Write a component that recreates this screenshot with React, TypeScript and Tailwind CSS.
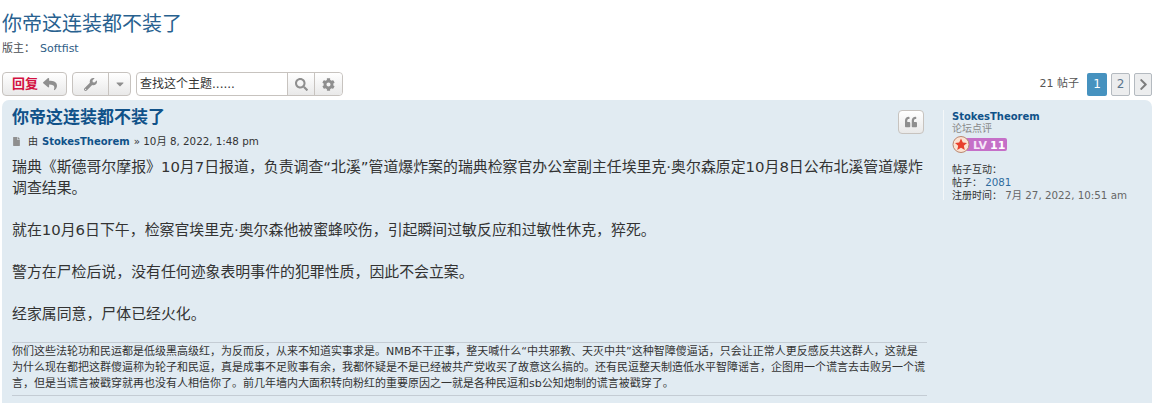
import { FaReply, FaWrench, FaCaretDown, FaSearch, FaCog, FaQuoteLeft, FaFile, FaChevronRight } from "react-icons/fa";

const font = "font-['DejaVu_Sans','Noto_Sans_CJK_SC',sans-serif]";

function Badge() {
  return (
    <svg width="56" height="17" viewBox="0 0 56 17" className="block">
      <rect x="10" y="2" width="45" height="13" rx="2" fill="#c56fc8" />
      <circle cx="9" cy="8.5" r="8" fill="#fbe3d3" stroke="#b9866f" />
      <path d="M9 2.5 L10.8 6.5 L15 7 L11.8 9.8 L12.8 14 L9 11.8 L5.2 14 L6.2 9.8 L3 7 L7.2 6.5 Z" fill="#e8402c" />
      <text x="21" y="12.5" fontSize="11" fontWeight="700" fill="#f6e6f8">LV</text>
      <text x="38" y="12.5" fontSize="11" fontWeight="700" fill="#ffffff">11</text>
    </svg>
  );
}

export default function App() {
  return (
    <div className={`${font} h-[403px] w-[1152px] overflow-hidden bg-white text-[11px] text-[#536482]`}>
      <div className="pl-[2px] pt-[11px]">
        <h2 className="text-[20px] leading-[26px] text-[#28618f]">你帝这连装都不装了</h2>
        <p className="mt-[4px] flex h-[16px] items-center text-[#4a4f56]">
          版主：<span className="ml-[5px] text-[#2f5d86]">Softfist</span>
        </p>

        {/* 工具栏 */}
        <div className="mt-[15px] flex h-[24px] items-center">
          <button className="flex h-[24px] w-[65px] items-center justify-center gap-[5px] rounded-[4px] border border-[#c7c3bf] bg-gradient-to-b from-white to-[#e9e9e9] text-[13px] font-bold text-[#d31141]">
            回复
            <FaReply size={14} className="text-[#8f8f8f]" />
          </button>
          <div className="ml-[5px] flex h-[24px] w-[59px] items-center rounded-[4px] border border-[#c7c3bf] bg-gradient-to-b from-white to-[#e9e9e9]">
            <div className="flex h-[22px] w-[36px] items-center justify-center border-r border-[#c7c3bf]">
              <FaWrench size={13} className="text-[#8f8f8f]" />
            </div>
            <FaCaretDown size={12} className="ml-[5px] text-[#8f8f8f]" />
          </div>
          <div className="ml-[5px] flex h-[24px] w-[207px] items-center rounded-[4px] border border-[#c7c3bf] bg-white">
            <span className="w-[150px] pl-[3px] text-[12px] text-[#333]">查找这个主题......</span>
            <div className="flex h-[22px] w-[28px] items-center justify-center border-x border-[#c7c3bf] bg-gradient-to-b from-white to-[#e9e9e9]">
              <FaSearch size={13} className="text-[#8f8f8f]" />
            </div>
            <div className="flex h-[22px] flex-1 items-center justify-center rounded-r-[4px] bg-gradient-to-b from-white to-[#e9e9e9]">
              <FaCog size={13} className="text-[#8f8f8f]" />
            </div>
          </div>
          <div className="ml-auto flex items-center">
            <span className="mr-[8px] text-[#555]">21 帖子</span>
            <span className="flex h-[23px] w-[20px] items-center justify-center rounded-[2px] bg-[#4692bf] text-[12px] text-white">1</span>
            <span className="ml-[4px] flex h-[23px] w-[19px] items-center justify-center rounded-[2px] border border-[#b4bac0] bg-[#ecedee] text-[12px] text-[#5c758c]">2</span>
            <span className="ml-[4px] flex h-[23px] w-[18px] items-center justify-center rounded-[2px] border border-[#b4bac0] bg-[#ecedee]">
              <FaChevronRight size={13} className="text-[#7d7d7d]" />
            </span>
          </div>
        </div>
      </div>

      {/* 帖子 */}
      <div className="ml-[2px] mt-[4px] flex h-[310px] rounded-[7px] bg-[#e1ebf2] pr-[10px] pl-[10px] pt-[6px]">
        <div className="w-[915px] shrink-0">
          <div className="flex justify-between">
            <div>
              <h3 className="text-[17px] leading-[23px] font-bold text-[#105289]">你帝这连装都不装了</h3>
              <p className="mt-[5px] flex h-[15px] items-center text-[10px] text-[#333]">
                <FaFile size={9} className="mr-[7px] text-[#8f8f8f]" />
                由 <span className="mx-[4px] font-bold text-[#105289]">StokesTheorem</span>
                <span className="text-[10.3px]">» 10月 8, 2022, 1:48 pm</span>
              </p>
            </div>
            <button className="mt-[4px] mr-[3px] flex h-[24px] w-[26px] items-center justify-center rounded-[4px] border border-[#c7c3bf] bg-gradient-to-b from-white to-[#e9e9e9]">
              <FaQuoteLeft size={12} className="text-[#8f8f8f]" />
            </button>
          </div>

          <div className="mt-[8px] text-[14.9px] leading-[21px] text-[#333]">
            <p>瑞典《斯德哥尔摩报》10月7日报道，负责调查“北溪”管道爆炸案的瑞典检察官办公室副主任埃里克·奥尔森原定10月8日公布北溪管道爆炸调查结果。</p>
            <p className="mt-[21px]">就在10月6日下午，检察官埃里克·奥尔森他被蜜蜂咬伤，引起瞬间过敏反应和过敏性休克，猝死。</p>
            <p className="mt-[21px]">警方在尸检后说，没有任何迹象表明事件的犯罪性质，因此不会立案。</p>
            <p className="mt-[21px]">经家属同意，尸体已经火化。</p>
          </div>

          <div className="mt-[17px] border-y border-[#c4ccd4] pt-[1px] pb-[3px] text-[11px] leading-[16px] text-[#333]">
            你们这些法轮功和民运都是低级黑高级红，为反而反，从来不知道实事求是。NMB不干正事，整天喊什么“中共邪教、天灭中共”这种智障傻逼话，只会让正常人更反感反共这群人，这就是为什么现在都把这群傻逼称为轮子和民逗，真是成事不足败事有余，我都怀疑是不是已经被共产党收买了故意这么搞的。还有民逗整天制造低水平智障谣言，企图用一个谎言去击败另一个谎言，但是当谎言被戳穿就再也没有人相信你了。前几年墙内大面积转向粉红的重要原因之一就是各种民逗和sb公知炮制的谎言被戳穿了。
          </div>
        </div>

        {/* 作者信息 */}
        <div className="mt-[4px] ml-[16px] h-[90px] flex-1 border-l border-[#f4f7f9] pl-[8px] pt-[1px] text-[10px] leading-[12px] text-[#333]">
          <p className="font-bold text-[#105289]">StokesTheorem</p>
          <p className="text-[#888]">论坛点评</p>
          <div className="mt-[1px]">
            <Badge />
          </div>
          <p className="mt-[11px]">帖子互动：</p>
          <p>帖子： <span className="text-[10.3px] text-[#2f6c9e]">2081</span></p>
          <p>注册时间： <span className="text-[10.3px] text-[#666]">7月 27, 2022, 10:51 am</span></p>
        </div>
      </div>
    </div>
  );
}
